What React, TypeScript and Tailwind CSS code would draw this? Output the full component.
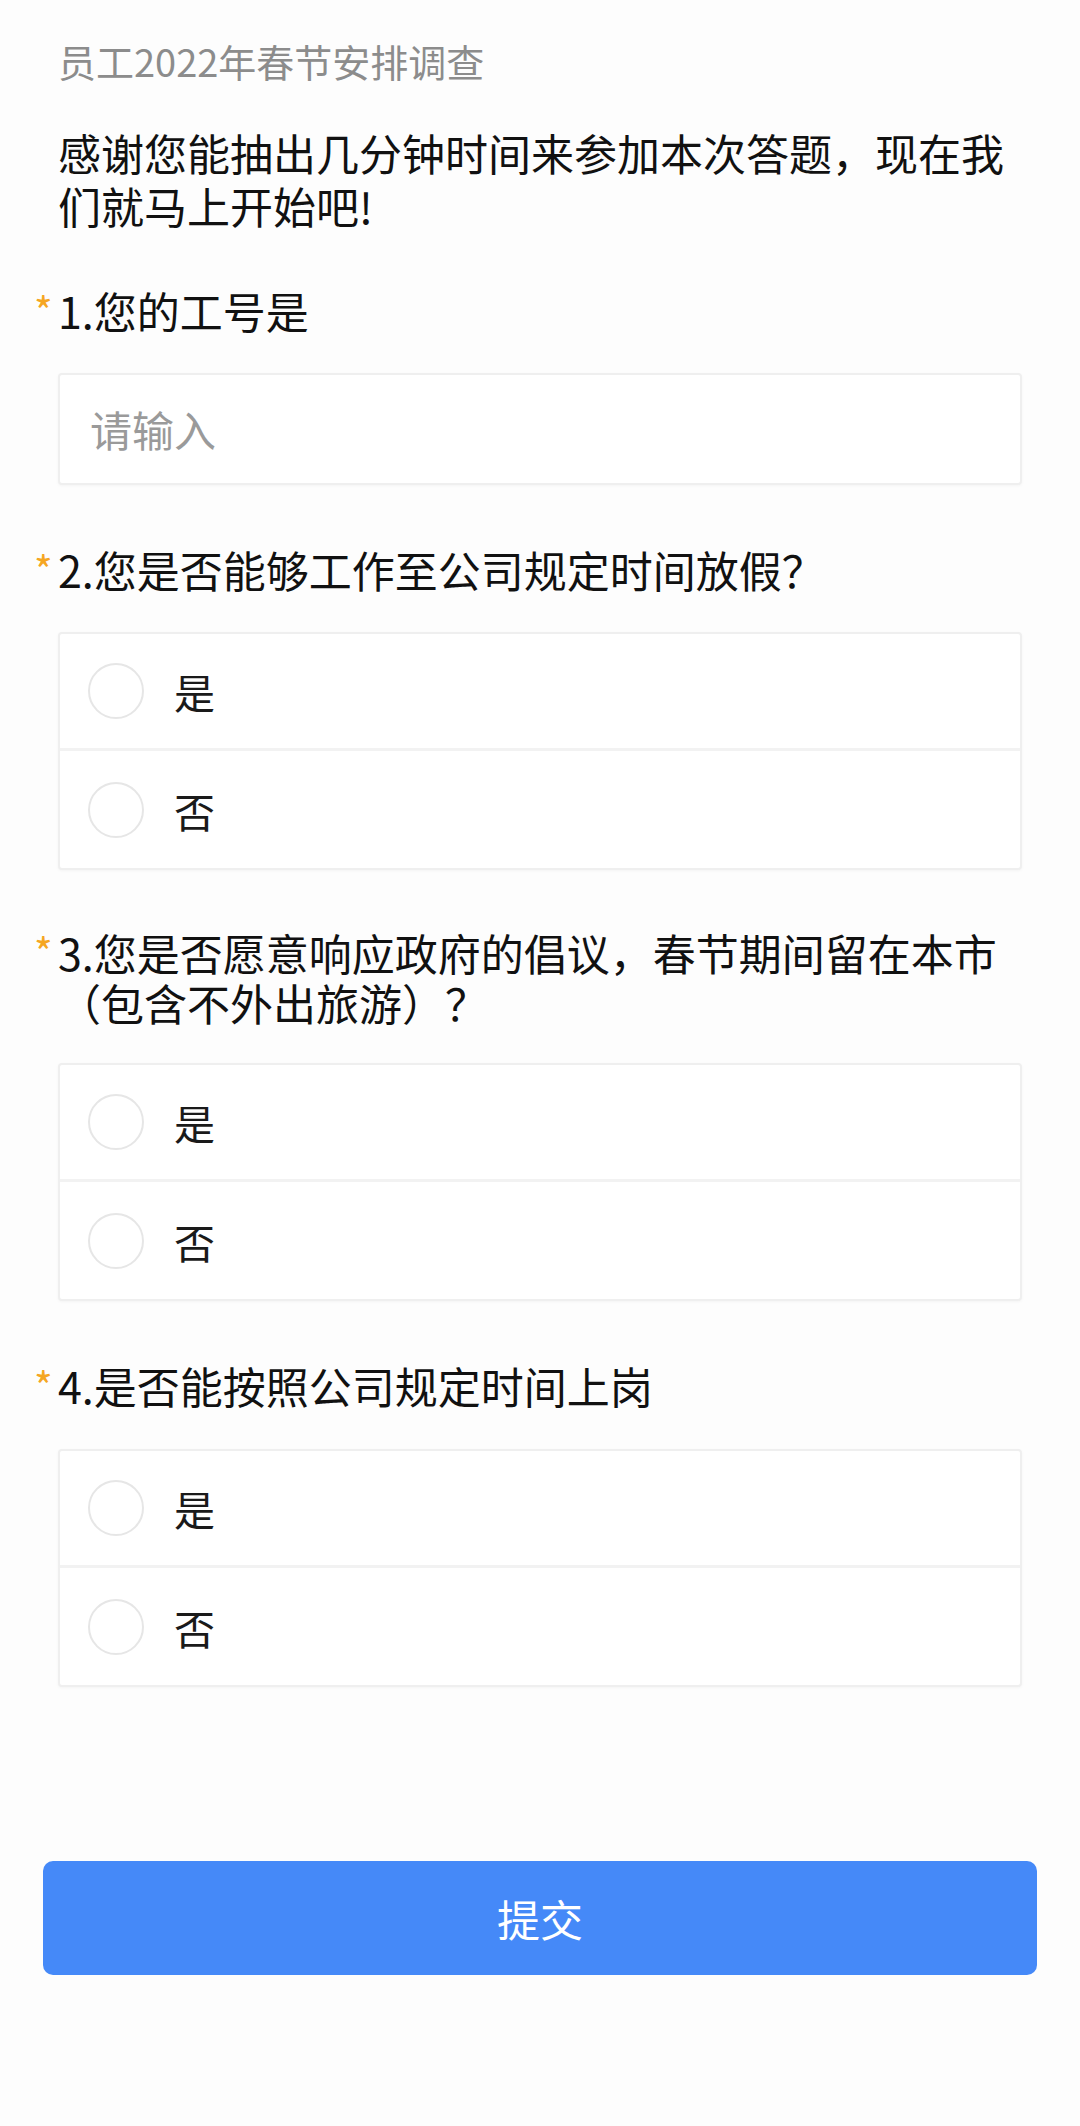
import React from "react";

const font = { fontFamily: '"Noto Sans CJK SC", "Noto Sans", sans-serif' };

function Star() {
  return (
    <span className="absolute left-[-24px] top-[8px] text-[40px] leading-[40px] text-[#f5a623]">*</span>
  );
}

function Options() {
  return (
    <div className="rounded-[4px] border-[2px] border-[#efefef] bg-white shadow-[0_1px_3px_rgba(0,0,0,0.04)]">
      {["是", "否"].map((o, i) => (
        <div
          key={o}
          className={`flex h-[117px] items-center pl-[28px] ${i === 0 ? "border-b-[3px] border-[#f2f2f2]" : ""}`}
        >
          <div className="h-[56px] w-[56px] rounded-full border-[2px] border-[#e6e6e6] bg-white" />
          <span className="ml-[30px] text-[41px] leading-[50px] text-[#1a1a1a]">{o}</span>
        </div>
      ))}
    </div>
  );
}

export default function App() {
  return (
    <div className="min-h-[2126px] w-[1080px] bg-[#fdfdfd]" style={font}>
      <div className="px-[58px] pt-[36px]">
        <div className="text-[38px] leading-[50px] text-[#8c8c8c]">员工2022年春节安排调查</div>
        <div className="mt-[40px] text-[43px] leading-[53px] text-[#111]">
          感谢您能抽出几分钟时间来参加本次答题，现在我们就马上开始吧!
        </div>

        <div className="relative mt-[50px] text-[43px] leading-[57px] text-[#111]">
          <Star />
          1.您的工号是
        </div>
        <div className="mt-[34px] flex h-[112px] items-center rounded-[4px] border-[2px] border-[#efefef] bg-white pl-[30px] shadow-[0_1px_3px_rgba(0,0,0,0.04)]">
          <span className="text-[42px] leading-[50px] text-[#9a9a9a]">请输入</span>
        </div>

        <div className="relative mt-[56px] text-[43px] leading-[57px] text-[#111]">
          <Star />
          2.您是否能够工作至公司规定时间放假？
        </div>
        <div className="mt-[34px]">
          <Options />
        </div>

        <div className="relative mt-[57px] text-[43px] leading-[50px] text-[#111]">
          <span className="absolute left-[-24px] top-[4px] text-[40px] leading-[40px] text-[#f5a623]">*</span>
          3.您是否愿意响应政府的倡议，春节期间留在本市（包含不外出旅游）？
        </div>
        <div className="mt-[36px]">
          <Options />
        </div>

        <div className="relative mt-[56px] text-[43px] leading-[57px] text-[#111]">
          <Star />
          4.是否能按照公司规定时间上岗
        </div>
        <div className="mt-[35px]">
          <Options />
        </div>
      </div>

      <div className="mt-[174px] px-[43px]">
        <button className="flex h-[114px] w-full items-center justify-center rounded-[10px] bg-[#4589f8] text-[43px] text-white">
          提交
        </button>
      </div>
    </div>
  );
}
